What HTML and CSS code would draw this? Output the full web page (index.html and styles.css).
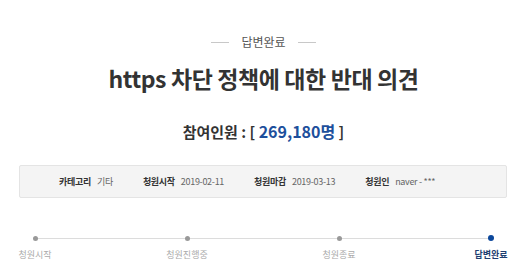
FILE: index.html
```html
<!DOCTYPE html>
<html>
<head>
    <meta charset="utf-8" />
    <title>https 차단 정책에 대한 반대 의견</title>
    <link rel="stylesheet" href="styles.css">
</head>
<body>
    <div class="petitionView">
        <div class="petitionStatus"><span>답변완료</span></div>
        <h3 class="petitionTitle">https 차단 정책에 대한 반대 의견</h3>
        <h2 class="petitionCount">참여인원 : [ <span class="countNum">269,180명</span> ]</h2>

        <ul class="petitionInfo">
            <li><b>카테고리</b>기타</li>
            <li><b>청원시작</b>2019-02-11</li>
            <li><b>청원마감</b>2019-03-13</li>
            <li><b>청원인</b>naver - ***</li>
        </ul>

        <!-- progress steps -->
        <ol class="petitionProgress">
            <li class="step"><i class="dot"></i><span>청원시작</span></li>
            <li class="step"><i class="dot"></i><span>청원진행중</span></li>
            <li class="step"><i class="dot"></i><span>청원종료</span></li>
            <li class="step on"><i class="dot"></i><span>답변완료</span></li>
        </ol>
    </div>
</body>
</html>
```

FILE: styles.css
```css
body
{
    margin:0;
    background:#fff;
    font-family:"Noto Sans CJK KR", "Noto Sans", sans-serif;
    color:#333;
}
.petitionView
{
    padding-top:34px;
}
.petitionStatus
{
    display:flex;
    justify-content:center;
    align-items:center;
    height:16px;
    font-size:12px;
    line-height:16px;
    color:#555;
}
.petitionStatus::before,
.petitionStatus::after
{
    content:"";
    width:18px;
    height:1px;
    background:#c8c8c8;
}
.petitionStatus span
{
    margin:0 12px;
}
.petitionTitle
{
    margin:13px 0 0 0;
    text-align:center;
    font-size:23px;
    line-height:30px;
    font-weight:700;
    color:#333;
    letter-spacing:-0.4px;
}
.petitionCount
{
    margin:27px 0 0 0;
    text-align:center;
    font-size:15px;
    line-height:22px;
    font-weight:700;
    color:#333;
}
.countNum
{
    font-size:16px;
    color:#1d4f9c;
}
.petitionInfo
{
    display:flex;
    align-items:center;
    box-sizing:border-box;
    height:33px;
    margin:22px 20px 0 19px;
    padding:0 0 0 39px;
    list-style:none;
    background:#f4f4f4;
    border:1px solid #e4e4e4;
    border-radius:2px;
    font-size:9px;
    color:#666;
}
.petitionInfo li
{
    margin-right:30px;
    letter-spacing:-0.3px;
}
.petitionInfo b
{
    color:#333;
    margin-right:6px;
}
.petitionProgress
{
    position:relative;
    display:flex;
    justify-content:space-between;
    margin:35px 0 0 0;
    padding:0 16px 0 15px;
    list-style:none;
}
.petitionProgress::before
{
    content:"";
    position:absolute;
    left:35px;
    right:36px;
    top:5px;
    height:1px;
    background:#dcdcdc;
}
.step
{
    position:relative;
    display:flex;
    flex-direction:column;
    align-items:center;
    width:40px;
    font-size:9px;
    line-height:14px;
    color:#aaa;
    white-space:nowrap;
}
.step .dot
{
    display:block;
    width:5px;
    height:5px;
    margin:3px 0 7px 0;
    border-radius:50%;
    background:#999;
}
.step.on
{
    color:#1e3f72;
    font-weight:700;
}
.step.on .dot
{
    width:6px;
    height:6px;
    margin:2px 0 7px 0;
    background:#0b479b;
}
```
